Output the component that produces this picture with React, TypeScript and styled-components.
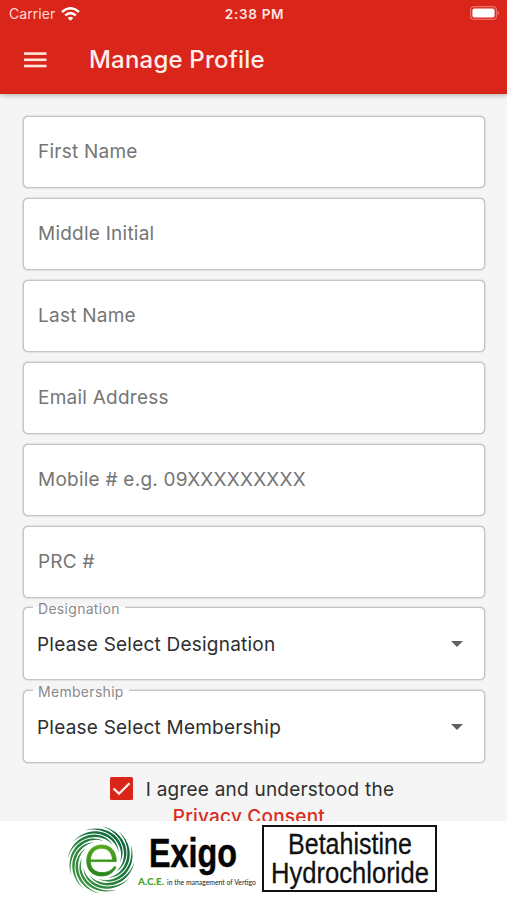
import React from "react";
import styled, { createGlobalStyle } from "styled-components";

const Global = createGlobalStyle`
  *, *::before, *::after { box-sizing: border-box; }
  body { margin: 0; background: #f5f5f5; font-family: Inter, "Liberation Sans", sans-serif; }
`;

const Screen = styled.div`
  width: 507px;
  height: 900px;
  display: flex;
  flex-direction: column;
  overflow: hidden;
  background: #f5f5f5;
`;

const Header = styled.header`
  flex: none;
  height: 94px;
  background: #da251a;
  color: #fff;
  box-shadow: 0 1px 5px rgba(0, 0, 0, 0.3);
  z-index: 1;
`;

const StatusBar = styled.div`
  height: 27px;
  display: grid;
  grid-template-columns: 1fr auto 1fr;
  align-items: center;
  padding: 0 7px 0 9px;
  font-size: 14px;
`;

const Carrier = styled.div`
  display: flex;
  align-items: center;
  gap: 6px;
  color: #ffd9d4;
  letter-spacing: 0.05px;
`;

const Clock = styled.div`
  font-weight: 600;
  font-size: 13.5px;
  letter-spacing: 0.7px;
  color: #ffe6e2;
`;

const Battery = styled.svg`
  justify-self: end;
  margin-top: -1px;
`;

const TitleBar = styled.div`
  height: 66px;
  display: flex;
  align-items: center;
  gap: 42px;
  padding-left: 24px;
`;

const Title = styled.h1`
  margin: 0;
  font-size: 24px;
  font-weight: 500;
  line-height: 30px;
  letter-spacing: 0.2px;
  color: #ffeeeb;
`;

const Form = styled.main`
  flex: 1;
  min-height: 0;
  overflow: hidden;
  padding: 22px 22px 0 23px;
  display: flex;
  flex-direction: column;
`;

const Field = styled.input`
  flex: none;
  display: block;
  width: 462px;
  height: 72px;
  margin: 0 0 10px;
  padding: 0 14px 2px;
  border: 1px solid #c4c4c4;
  border-radius: 5px;
  box-shadow: 0 0 1.5px #999;
  background: #fff;
  outline: none;
  font: 400 19px Inter, sans-serif;
  letter-spacing: 0.24px;
  color: #333;
  &::placeholder { color: #757575; opacity: 1; }
`;

const SelectBox = styled.div`
  flex: none;
  position: relative;
  top: -1px;
  width: 462px;
  height: 73px;
  margin-bottom: 10px;
  padding: 1px 21px 0 13px;
  border: 1px solid #c4c4c4;
  border-radius: 5px;
  box-shadow: 0 0 1.5px #999;
  background: #fff;
  display: flex;
  align-items: center;
  justify-content: space-between;
  font-size: 19px;
  color: #2e2e2e;
`;

const FloatingLabel = styled.span`
  position: absolute;
  left: 9px;
  top: -8px;
  padding: 0 5px;
  font-size: 14px;
  line-height: 17px;
  letter-spacing: 0.3px;
  color: #8a8a8a;
  background: linear-gradient(#f5f5f5 0 7px, #fff 7px);
`;

const Value = styled.span`
  letter-spacing: 0.22px;
`;

const Consent = styled.div`
  display: flex;
  justify-content: center;
  gap: 13px;
  padding: 2px 4px 0 0;
`;

const Check = styled.svg`
  flex: none;
  margin-top: 1px;
`;

const ConsentText = styled.div`
  font-size: 19px;
  line-height: 27px;
  letter-spacing: 0.22px;
  color: #303030;
`;

const ConsentLink = styled.a`
  display: block;
  padding-left: 27px;
  font-weight: 500;
  color: #da2c20;
`;

const Banner = styled.footer`
  flex: none;
  height: 79px;
  padding: 4px 0 0 66px;
  display: flex;
  gap: 4px;
  background: #fff;
`;

const DrugBox = styled.div`
  width: 175px;
  height: 67px;
  border: 2px solid #111;
`;

const fields = [
  "First Name",
  "Middle Initial",
  "Last Name",
  "Email Address",
  "Mobile # e.g. 09XXXXXXXXX",
  "PRC #",
];

const selects = [
  { label: "Designation", value: "Please Select Designation" },
  { label: "Membership", value: "Please Select Membership" },
];

/* One tapered blade: outer tip, sweeping clockwise and closing in on the centre. */
const blade = (start: number, outer: number, inner: number, sweep: number, width: number) => {
  const steps = 20;
  const a: string[] = [];
  const b: string[] = [];
  for (let i = 0; i <= steps; i++) {
    const t = i / steps;
    const angle = ((start + sweep * t) * Math.PI) / 180;
    const r = outer + (inner - outer) * t;
    const w = (width / 2) * Math.sin(Math.PI * t);
    a.push(`${(35 + (r + w) * Math.cos(angle)).toFixed(2)},${(35 + (r + w) * Math.sin(angle)).toFixed(2)}`);
    b.unshift(`${(35 + (r - w) * Math.cos(angle)).toFixed(2)},${(35 + (r - w) * Math.sin(angle)).toFixed(2)}`);
  }
  return `M${a.join("L")}L${b.join("L")}Z`;
};

const blades = Array.from({ length: 12 }, (_, i) => blade(i * 30 - 88, 33.5, 19, 125, 2.7));

const ExigoLogo = () => (
  <svg width="192" height="72" viewBox="0 0 192 72" overflow="visible">
    <defs>
      <linearGradient id="leaf" x1="0" y1="0" x2="0" y2="1">
        <stop offset="0" stopColor="#55a81c" />
        <stop offset="0.5" stopColor="#3a961b" />
        <stop offset="1" stopColor="#26851c" />
      </linearGradient>
      <linearGradient id="swirl" gradientUnits="userSpaceOnUse" x1="60" y1="12" x2="8" y2="58">
        <stop offset="0" stopColor="#08653a" />
        <stop offset="1" stopColor="#3e9540" />
      </linearGradient>
    </defs>
    {blades.map((d, i) => (
      <path key={i} d={d} fill="url(#swirl)" />
    ))}
    <path
      d="M50.3 36.6H24.3C24.5 43.4 29 47.6 36 47.6C42 47.6 46 45.2 48.5 41.4L50 42.3C47.2 48 42 51 35.5 51C26.5 51 20.7 44.8 20.7 35.8C20.7 26.4 26.8 20 35.7 20C44.7 20 50.3 26.2 50.3 36.6ZM46.6 34.9C46.1 27.7 42 23.2 35.7 23.2C29.2 23.2 24.9 27.7 24.3 34.9Z"
      fill="url(#leaf)"
      stroke="url(#leaf)"
      strokeWidth="0.8"
    />
    <text x="83" y="42" textLength="88" lengthAdjust="spacingAndGlyphs" fontFamily="Liberation Sans" fontWeight="700" fontSize="40" fill="#050505" stroke="#050505" strokeWidth="0.5">Exigo</text>
    <text x="72" y="60" textLength="26" lengthAdjust="spacingAndGlyphs" fontFamily="Lato" fontWeight="900" fontSize="9.5" fill="#45a51d">A.C.E.</text>
    <text x="101" y="60" textLength="89" lengthAdjust="spacingAndGlyphs" fontFamily="Lato" fontSize="7.5" fill="#222">in the management of Vertigo</text>
  </svg>
);

export default function App() {
  return (
    <>
      <Global />
      <Screen>
        <Header>
          <StatusBar>
            <Carrier>
              Carrier
              <svg width="19" height="14" viewBox="0 0 19 14" fill="none" stroke="#fff" strokeWidth="2.5">
                <path d="M1 5Q9.5-2.5 18 5" />
                <path d="M4.2 8.4Q9.5 3.8 14.8 8.4" />
                <path d="M6.7 10.9Q9.5 8.5 12.3 10.9L9.5 13.8Z" fill="#fff" stroke="none" />
              </svg>
            </Carrier>
            <Clock>2:38 PM</Clock>
            <Battery width="30" height="14" viewBox="0 0 30 14">
              <rect x="0.6" y="0.6" width="25.8" height="12.8" rx="3.5" fill="none" stroke="#ea7068" strokeWidth="1.2" />
              <rect x="2.4" y="2.4" width="22.2" height="9.2" rx="2" fill="#fff" />
              <path d="M27.5 4.5Q31 7 27.5 9.5Z" fill="#ea7068" />
            </Battery>
          </StatusBar>
          <TitleBar>
            <svg width="23" height="16" viewBox="0 0 23 16" fill="#ffe3df">
              <rect y="0.3" width="22.5" height="2.6" />
              <rect y="6.5" width="22.5" height="2.6" />
              <rect y="12.7" width="22.5" height="2.6" />
            </svg>
            <Title>Manage Profile</Title>
          </TitleBar>
        </Header>
        <Form>
          {fields.map((name) => (
            <Field key={name} placeholder={name} />
          ))}
          {selects.map((s) => (
            <SelectBox key={s.label}>
              <FloatingLabel>{s.label}</FloatingLabel>
              <Value>{s.value}</Value>
              <svg width="12" height="6" viewBox="0 0 12 6">
                <path d="M0 0H12L6 6Z" fill="#606060" />
              </svg>
            </SelectBox>
          ))}
          <Consent>
            <Check width="23" height="23" viewBox="0 0 23 23">
              <rect width="23" height="23" rx="1.5" fill="#da251a" />
              <path d="M3.5 11.5L9 16.7L19.5 6.2" fill="none" stroke="#fff0ed" strokeWidth="2.3" />
            </Check>
            <ConsentText>
              I agree and understood the
              <ConsentLink>Privacy Consent</ConsentLink>
            </ConsentText>
          </Consent>
        </Form>
        <Banner>
          <ExigoLogo />
          <DrugBox>
            <svg width="171" height="63" viewBox="0 0 171 63" overflow="visible" fontFamily="Liberation Sans" fontSize="30" fill="#111" stroke="#111" strokeWidth="0.3">
              <text x="24" y="27" textLength="124" lengthAdjust="spacingAndGlyphs">Betahistine</text>
              <text x="7" y="56" textLength="158" lengthAdjust="spacingAndGlyphs">Hydrochloride</text>
            </svg>
          </DrugBox>
        </Banner>
      </Screen>
    </>
  );
}
